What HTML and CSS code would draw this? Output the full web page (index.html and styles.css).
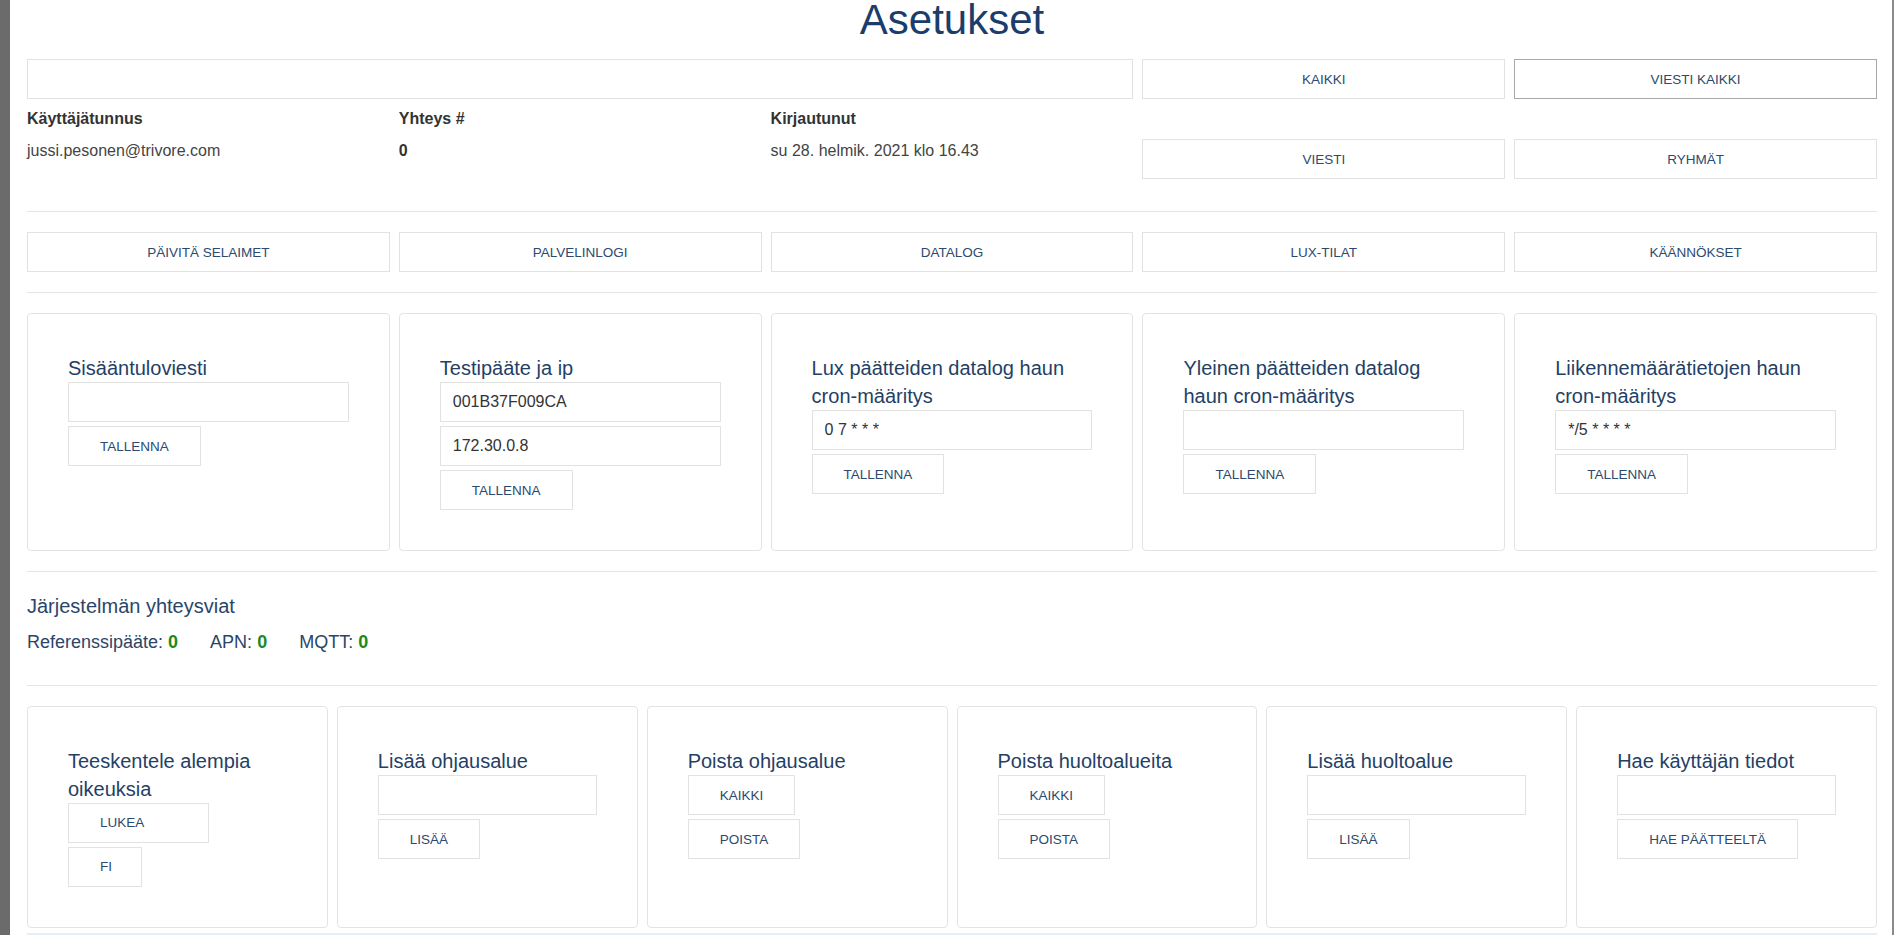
FILE: index.html
```html
<!DOCTYPE html>
<html lang="fi">
<head>
<meta charset="utf-8">
<title>Asetukset</title>
<link rel="stylesheet" href="styles.css">
</head>
<body>
<div class="frame">
  <div class="leftbar"></div>
  <main class="main">
    <h1 class="title">Asetukset</h1>

    <div class="grid5 toprow">
      <input class="field span3" type="text" value="">
      <button class="btn">KAIKKI</button>
      <button class="btn btn-active">VIESTI KAIKKI</button>
    </div>

    <div class="grid5 info">
      <div class="info-col">
        <div class="info-label">Käyttäjätunnus</div>
        <div class="info-value">jussi.pesonen@trivore.com</div>
      </div>
      <div class="info-col">
        <div class="info-label">Yhteys #</div>
        <div class="info-value bold">0</div>
      </div>
      <div class="info-col">
        <div class="info-label">Kirjautunut</div>
        <div class="info-value">su 28. helmik. 2021 klo 16.43</div>
      </div>
      <button class="btn info-btn">VIESTI</button>
      <button class="btn info-btn">RYHMÄT</button>
    </div>

    <hr class="sep">

    <div class="grid5">
      <button class="btn">PÄIVITÄ SELAIMET</button>
      <button class="btn">PALVELINLOGI</button>
      <button class="btn">DATALOG</button>
      <button class="btn">LUX-TILAT</button>
      <button class="btn">KÄÄNNÖKSET</button>
    </div>

    <hr class="sep">

    <div class="cards5">
      <section class="card">
        <h3 class="card-title">Sisääntuloviesti</h3>
        <input class="field" type="text" value="">
        <button class="btn btn-sm">TALLENNA</button>
      </section>
      <section class="card">
        <h3 class="card-title">Testipääte ja ip</h3>
        <input class="field" type="text" value="001B37F009CA">
        <input class="field" type="text" value="172.30.0.8">
        <button class="btn btn-sm">TALLENNA</button>
      </section>
      <section class="card">
        <h3 class="card-title">Lux päätteiden datalog haun cron-määritys</h3>
        <input class="field" type="text" value="0 7 * * *">
        <button class="btn btn-sm">TALLENNA</button>
      </section>
      <section class="card">
        <h3 class="card-title">Yleinen päätteiden datalog haun cron-määritys</h3>
        <input class="field" type="text" value="">
        <button class="btn btn-sm">TALLENNA</button>
      </section>
      <section class="card">
        <h3 class="card-title">Liikennemäärätietojen haun cron-määritys</h3>
        <input class="field" type="text" value="*/5 * * * *">
        <button class="btn btn-sm">TALLENNA</button>
      </section>
    </div>

    <hr class="sep">

    <div class="faults">
      <h3 class="faults-title">Järjestelmän yhteysviat</h3>
      <div class="faults-row">
        <span>Referenssipääte: <b class="ok">0</b></span>
        <span>APN: <b class="ok">0</b></span>
        <span>MQTT: <b class="ok">0</b></span>
      </div>
    </div>

    <hr class="sep">

    <div class="cards6">
      <section class="card">
        <h3 class="card-title">Teeskentele alempia oikeuksia</h3>
        <div class="select sel-wide">LUKEA</div>
        <div class="select sel-narrow">FI</div>
      </section>
      <section class="card">
        <h3 class="card-title">Lisää ohjausalue</h3>
        <input class="field" type="text" value="">
        <button class="btn btn-sm">LISÄÄ</button>
      </section>
      <section class="card">
        <h3 class="card-title">Poista ohjausalue</h3>
        <button class="btn btn-sm">KAIKKI</button>
        <button class="btn btn-sm">POISTA</button>
      </section>
      <section class="card">
        <h3 class="card-title">Poista huoltoalueita</h3>
        <button class="btn btn-sm">KAIKKI</button>
        <button class="btn btn-sm">POISTA</button>
      </section>
      <section class="card">
        <h3 class="card-title">Lisää huoltoalue</h3>
        <input class="field" type="text" value="">
        <button class="btn btn-sm">LISÄÄ</button>
      </section>
      <section class="card">
        <h3 class="card-title">Hae käyttäjän tiedot</h3>
        <input class="field" type="text" value="">
        <button class="btn btn-sm">HAE PÄÄTTEELTÄ</button>
      </section>
    </div>

    <div class="bottom-strip"></div>
  </main>
  <div class="rightbar"></div>
</div>
</body>
</html>
```

FILE: styles.css
```css
* {
  box-sizing: border-box;
}

html, body {
  margin: 0;
  padding: 0;
  background: #ffffff;
}

body {
  font-family: "Liberation Sans", Arial, Helvetica, sans-serif;
  font-size: 16px;
  color: #333333;
  overflow: hidden;
}

.frame {
  display: flex;
  min-height: 935px;
}

.leftbar {
  width: 10px;
  flex: 0 0 10px;
  background: #6b6b6b;
}

.main {
  flex: 1;
  padding: 0 9px 0 17px;
  min-width: 0;
}

.rightbar {
  width: 8px;
  flex: 0 0 8px;
  border-right: 2px solid #8a8a8a;
}

.title {
  margin: 0 0 19px;
  font-size: 42px;
  line-height: 40px;
  font-weight: 400;
  text-align: center;
  color: #1c3d6c;
}

.grid5 {
  display: grid;
  grid-template-columns: repeat(5, 1fr);
  column-gap: 9px;
  align-items: start;
}

.cards5 {
  display: grid;
  grid-template-columns: repeat(5, 1fr);
  column-gap: 9px;
  align-items: stretch;
}

.cards6 {
  display: grid;
  grid-template-columns: repeat(6, 1fr);
  column-gap: 9px;
  align-items: stretch;
}

.span3 {
  grid-column: span 3;
}

.field {
  display: block;
  width: 100%;
  height: 40px;
  margin: 0;
  padding: 0 12px;
  border: 1px solid #e2e2e2;
  border-radius: 0;
  background: #ffffff;
  font-family: "Liberation Sans", Arial, Helvetica, sans-serif;
  font-size: 16px;
  color: #333333;
  outline: none;
}

.btn {
  display: block;
  height: 40px;
  margin: 0;
  padding: 0 31px;
  border: 1px solid #e2e2e2;
  border-radius: 0;
  background: #ffffff;
  font-family: "Liberation Sans", Arial, Helvetica, sans-serif;
  font-size: 13.5px;
  color: #2c4a6e;
  text-transform: uppercase;
  white-space: nowrap;
  cursor: pointer;
}

.btn-active {
  border-color: #a9a9a9;
}

.btn-sm {
  width: auto;
}

.grid5 > .btn {
  width: 100%;
}

.info {
  padding-top: 9px;
  padding-bottom: 12px;
}

.info-label {
  font-weight: 700;
  line-height: 22px;
  color: #333333;
  margin-bottom: 10px;
}

.info-value {
  line-height: 22px;
  color: #444444;
}

.bold {
  font-weight: 700;
  color: #333333;
}

.info-btn {
  margin-top: 31px;
}

.sep {
  border: 0;
  border-top: 1px solid #e4e4e4;
  margin: 20px 0;
  height: 0;
}

.card {
  display: flex;
  flex-direction: column;
  align-items: flex-start;
  gap: 4px;
  padding: 40px;
  border: 1px solid #e3e3e3;
  border-radius: 4px;
  background: #ffffff;
}

.card .field {
  width: 100%;
}

.card-title {
  margin: 0 0 -4px;
  font-size: 20px;
  line-height: 28px;
  font-weight: 400;
  color: #243f66;
}

.select {
  height: 40px;
  padding: 0 0 0 31px;
  border: 1px solid #e2e2e2;
  background: #ffffff;
  font-size: 13.5px;
  line-height: 38px;
  color: #2c4a6e;
}

.sel-wide {
  width: 141px;
}

.sel-narrow {
  width: 74px;
}

.faults {
  padding-bottom: 9px;
}

.faults-title {
  margin: 0 0 8px;
  font-size: 20px;
  line-height: 28px;
  font-weight: 400;
  color: #2b4568;
}

.faults-row {
  display: flex;
  gap: 32px;
  font-size: 18px;
  line-height: 28px;
  color: #2b4568;
}

.ok {
  color: #1b8a1b;
  font-weight: 700;
}

.bottom-strip {
  margin-top: 5px;
  height: 12px;
  background: #e0f0f5;
}
```
